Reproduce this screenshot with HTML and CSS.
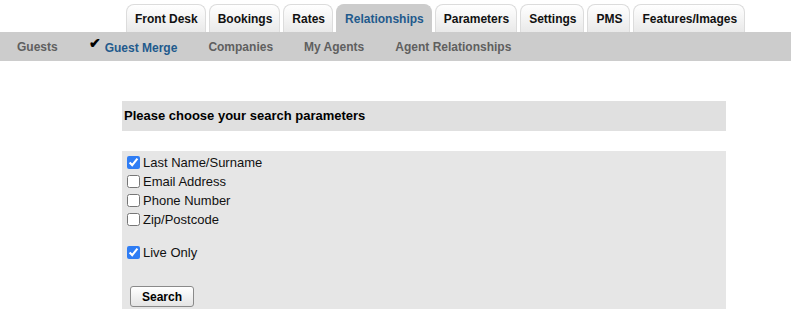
FILE: index.html
```html
<!DOCTYPE html>
<html>
<head>
  <title>Guest Merge</title>
  <link rel="stylesheet" href="styles.css">
</head>
<body>
  <div class="tabs">
    <a class="tab">Front Desk</a>
    <a class="tab">Bookings</a>
    <a class="tab">Rates</a>
    <a class="tab active">Relationships</a>
    <a class="tab">Parameters</a>
    <a class="tab">Settings</a>
    <a class="tab">PMS</a>
    <a class="tab">Features/Images</a>
  </div>

  <div class="subnav">
    <a class="sub">Guests</a>
    <a class="sub current"><span class="tick">&#10004;</span>Guest Merge</a>
    <a class="sub">Companies</a>
    <a class="sub">My Agents</a>
    <a class="sub">Agent Relationships</a>
  </div>

  <div class="content">
    <div class="panel-head">Please choose your search parameters</div>

    <form class="panel">
      <label class="opt"><input type="checkbox" checked> Last Name/Surname</label>
      <label class="opt"><input type="checkbox"> Email Address</label>
      <label class="opt"><input type="checkbox"> Phone Number</label>
      <label class="opt"><input type="checkbox"> Zip/Postcode</label>

      <label class="opt live"><input type="checkbox" checked> Live Only</label>

      <button type="button" class="btn">Search</button>
    </form>
  </div>
</body>
</html>
```

FILE: styles.css
```css
body {
  margin: 0;
  font-family: 'Liberation Sans', Arial, sans-serif;
  color: #000;
  background: #fff;
}
.tabs {
  display: flex;
  gap: 3px;
  padding: 4px 0 0 126px;
  height: 32px;
  box-sizing: border-box;
}
.tab {
  display: flex;
  align-items: center;
  padding: 0 7px 0 8px;
  font-size: 12px;
  font-weight: 700;
  color: #111;
  border: 1px solid #dcdcdc;
  border-bottom: none;
  border-radius: 8px 8px 0 0;
  background: linear-gradient(#ffffff, #e9e9e9);
}
.tab.active {
  background: #cccccc;
  border-color: #cccccc;
  color: #1f5a8c;
}
.subnav {
  display: flex;
  align-items: center;
  gap: 31px;
  height: 29px;
  padding-left: 17px;
  background: #cccccc;
}
.sub {
  font-size: 12px;
  font-weight: 700;
  color: #5f5f5f;
}
.sub.current {
  color: #1f5a8c;
}
.tick {
  color: #000;
  font-size: 14px;
  margin-right: 4px;
  position: relative;
  top: -4px;
}
.content {
  margin: 40px 0 0 122px;
  width: 604px;
}
.panel-head {
  height: 30px;
  line-height: 30px;
  padding-left: 2px;
  background: #e0e0e0;
  font-size: 13px;
  font-weight: 700;
}
.panel {
  margin: 20px 0 0;
  padding: 2px 0 2px;
  background: #e6e6e6;
  display: flex;
  flex-direction: column;
  align-items: flex-start;
}
.opt {
  display: flex;
  align-items: center;
  height: 19px;
  font-size: 13px;
  color: #111;
}
.opt input {
  width: 13px;
  height: 13px;
  margin: 0 3px 0 5px;
  accent-color: #2f7df4;
}
.opt.live {
  margin-top: 14px;
}
.btn {
  margin: 24px 0 0 8px;
  width: 64px;
  height: 21px;
  padding: 0;
  font-family: inherit;
  font-size: 12px;
  font-weight: 700;
  color: #000;
  border: 1px solid #8a8a8a;
  border-radius: 3px;
  background: linear-gradient(#ffffff, #e4e4e4);
}
```
